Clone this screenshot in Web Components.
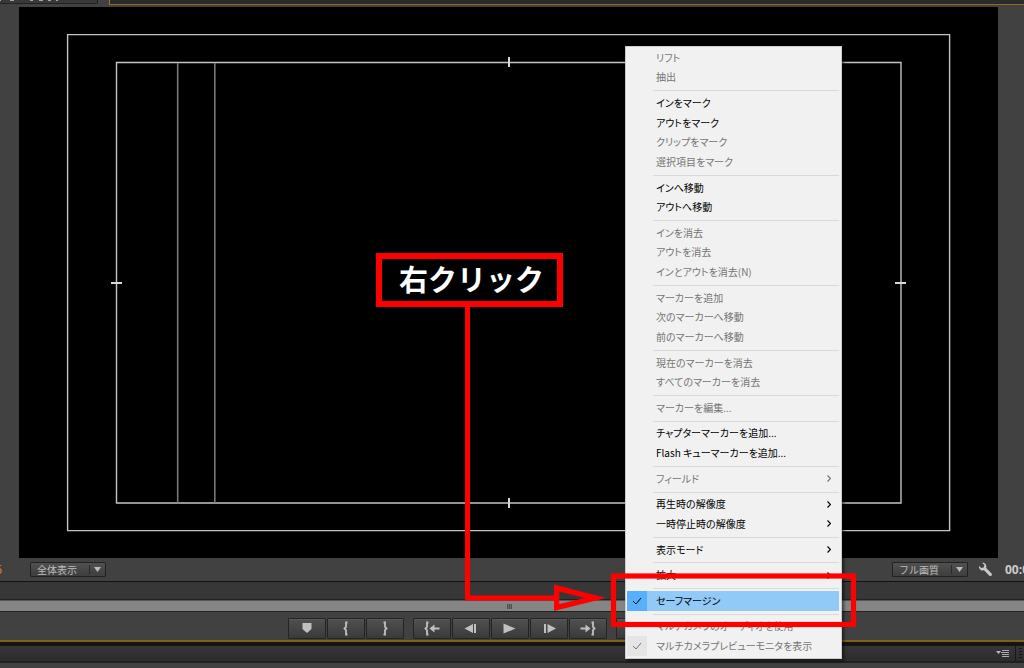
<!DOCTYPE html>
<html lang="ja"><head><meta charset="utf-8"><title>プログラムモニター</title>
<style>
html,body{margin:0;height:100%}
body{background:#414141;overflow:hidden;font-family:"Noto Sans CJK JP","Noto Sans",sans-serif}
</style></head><body>
<monitor-app></monitor-app>
<script>
const define=(name,html,init)=>customElements.define(name,class extends HTMLElement{
  connectedCallback(){
    if(this.shadowRoot)return;
    this.attachShadow({mode:'open'}).innerHTML=html;
    if(init)init.call(this,this.shadowRoot);
  }
});

define('panel-tabs',`<style>
:host{display:flex;gap:11px;height:7px;flex:none;align-items:flex-start}
.tab{width:98px;height:4px;box-sizing:border-box;background:#383838;border-bottom:1px solid #222;border-right:1px solid #222;border-radius:0 0 2px 0}
.tab svg{display:block}
.active{flex:1;height:5px;box-sizing:border-box;background:#2b2b2b;border-left:1px solid #a07a1c;border-bottom:1px solid #8f6c18}
</style><div class="tab"><svg width="97" height="1" aria-hidden="true"><path d="M0 .5h1M10 .5h4M30 .5h3M39 .5h4M48 .5h3M56 .5h2" stroke="#a8a8a0"/></svg></div><div class="active"></div>`);

define('safe-margins',`<style>
:host{display:block;flex:1;min-height:0;background:#000;margin:0 26px 0 19px}
svg{display:block;width:100%;height:100%}
path,rect{fill:none;stroke:#c4c4c4;stroke-width:1.400;vector-effect:non-scaling-stroke}
.guides{stroke:#777;stroke-width:1.600}.ticks{stroke:#d8d8d8;stroke-width:2}
</style><svg viewBox="0 0 979 551" preserveAspectRatio="none" aria-hidden="true">
<rect x="48.600" y="27.600" width="882" height="496"/>
<rect x="97.500" y="55.500" width="784.500" height="440.500"/>
<path class="guides" d="M158.700 56v440M195.800 56v440"/>
<path class="ticks" d="M490 50v10M490 491v10M92 276h11M876 276h11"/>
</svg>`);

define('drop-field',`<style>
:host{display:block;width:76px;flex:none}
label{display:grid;position:relative}
select{appearance:none;width:100%;height:15px;box-sizing:border-box;margin:0;padding:0 20px 0 6px;border:1px solid #222;border-radius:1px;background:linear-gradient(#505050,#3e3e3e);color:#bdbdbd;font:10px/13px "Noto Sans CJK JP","Noto Sans",sans-serif}
svg{position:absolute;right:4px;top:3px;pointer-events:none}
</style><label><select></select><svg width="13" height="9" aria-hidden="true"><path d="M.5 0v9" stroke="#2a2a2a"/><path d="M5 2h7l-3.500 5z" fill="#bbb"/></svg></label>`,function(r){
  const s=r.querySelector('select');s.setAttribute('aria-label',this.getAttribute('label'));s.add(new Option(this.getAttribute('value')));
});

define('status-row',`<style>
:host{display:flex;align-items:center;height:23px;flex:none;border-bottom:1px solid #111}
.frame{width:2px;margin-right:28px;overflow:hidden;display:flex;justify-content:flex-end;color:#e87e1c;font:12px/14px "Noto Sans",sans-serif}
.space{flex:1}
button{border:0;background:none;padding:0;margin:0 12px 0 10px;width:15px;height:15px}
svg{display:block}
.time{width:19px;overflow:hidden;white-space:nowrap;color:#ccc;font:bold 12px/14px "Open Sans","Noto Sans",sans-serif}
</style><span class="frame">5</span><drop-field label="ズームレベル" value="全体表示"></drop-field><span class="space"></span>
<drop-field label="再生解像度" value="フル画質"></drop-field>
<button aria-label="設定"><svg width="15" height="15" viewBox="0 0 15 15"><path d="M4.200.900 6.400 3.100 5.700 5.400 3.400 6 1.100 3.900C.6 6.800 3 9 6 8.300L11.300 13.700C12.700 15 14.900 13 13.600 11.500L8.200 6.100C9 3 7 .300 4.200.900Z" fill="#c8c8c8"/></svg></button><span class="time">00:0</span>`);

define('time-ruler',`<style>
:host{display:block;flex:none}
.ruler{height:17px;background:#373737;border-bottom:1px solid #222}
.bar{height:12px;background:#858585;border-bottom:1px solid #222;border-top:1px solid #555;box-sizing:border-box;display:flex;justify-content:center;align-items:center;padding-right:6px}
.grip{width:5px;height:5px;background:repeating-linear-gradient(90deg,#505050 0 1px,#6b6b6b 1px 2px)}
</style><div class="ruler"></div><div class="bar"><div class="grip"></div></div>`);

const icons={
 marker:'<path d="M14 5h9v6l-4.500 4L14 11z"/>',
 in:'<path d="M20 4.500h-1.500v4.500l-1.500 1.500 1.500 1.500v4.500H20" class="l"/>',
 out:'<path d="M17 4.500h1.500v4.500l1.500 1.500-1.500 1.500v4.500H17" class="l"/>',
 goin:'<path d="M15 4.500h-1.500v4.500L12 10.500l1.500 1.500v4.500H15" class="l"/><path d="M16 10.500l5-4v3h5v2h-5v3z"/>',
 back:'<path d="M12 10.500l8.500-4.500v9zM21.500 6h2v9h-2z"/>',
 play:'<path d="M12 5.500l12 5-12 5z"/>',
 step:'<path d="M13.500 6h2v9h-2zM17 6l8.500 4.500L17 15z"/>',
 goout:'<path d="M22 4.500h1.500v4.500l1.500 1.500-1.500 1.500v4.500H22" class="l"/><path d="M21 10.500l-5-4v3h-5v2h5v3z"/>'};
define('transport-button',`<style>
:host{display:block;width:38px;height:21px}
button{display:block;width:100%;height:100%;box-sizing:border-box;padding:0;border:1px solid #242424;border-radius:1px;background:linear-gradient(#505050,#3a3a3a);box-shadow:inset 0 1px #5a5a5a}
svg{display:block;margin:-1px;fill:#c0c0c0}.l{fill:none;stroke:#c0c0c0;stroke-width:1.800}
</style><button><svg width="38" height="21" viewBox="0 0 37 21" aria-hidden="true"></svg></button>`,function(r){
  r.querySelector('button').setAttribute('aria-label',this.getAttribute('label'));
  r.querySelector('svg').innerHTML=icons[this.getAttribute('icon')]||'';
});
define('transport-bar',`<style>
:host{display:flex;justify-content:center;align-items:flex-end;gap:9px;height:28px;flex:none;padding:0 5px 1px 0;box-sizing:border-box}
div{display:flex;gap:1px}
</style><div><transport-button icon="marker" label="マーカーを追加"></transport-button><transport-button icon="in" label="インをマーク"></transport-button><transport-button icon="out" label="アウトをマーク"></transport-button></div>
<div><transport-button icon="goin" label="インへ移動"></transport-button><transport-button icon="back" label="前のフレーム"></transport-button><transport-button icon="play" label="再生"></transport-button><transport-button icon="step" label="次のフレーム"></transport-button><transport-button icon="goout" label="アウトへ移動"></transport-button></div>
<div><transport-button label="リフト"></transport-button><transport-button label="抽出"></transport-button><transport-button label="フレームを書き出し"></transport-button></div>`);

define('panel-footer',`<style>
:host{display:block;flex:none;border-top:2px solid #806015}
.edge{height:4px;background:#151515}
.row{display:flex;height:15px;background:linear-gradient(#363636,#2c2c2c);border-bottom:2px solid #202020}
.main{flex:1;display:flex;justify-content:flex-end;align-items:center;padding-right:5px;border-right:1px solid #191919}
.next{width:8px;display:flex;align-items:center;justify-content:center}
.base{height:5px;background:#414141}svg{display:block}
</style><div class="edge"></div><div class="row"><div class="main"><svg width="14" height="9" aria-hidden="true"><path d="M0 2h5L2.500 5z" fill="#bbb"/><path d="M6 1.500h7M5 3.500h8M6 5.500h7M6 7.500h7" stroke="#aaa"/></svg></div><div class="next"><svg width="3" height="12" aria-hidden="true"><path d="M1.500 0v12" stroke="#151515" stroke-width="3" stroke-dasharray="1 2"/></svg></div></div><div class="base"></div>`);

define('menu-item',`<style>
:host{display:flex;flex:1 1 0;min-height:0}
button{flex:1;display:flex;align-items:center;min-width:0;padding:0 8px 0 0;border:0;background:none;text-align:left;color:#000;font:10px/16px "Noto Sans CJK JP","Noto Sans",sans-serif;font-feature-settings:"palt";white-space:nowrap}
:host([disabled]) button{color:#757575}
:host([current]) button{background:#91c9f7}
.check{width:20px;align-self:stretch;margin-right:9px;display:flex;align-items:center;justify-content:center;flex:none}
:host([checked]) .check{background:#e5e5e5}
:host([current]) .check{background:#58b0fb}
.text{flex:1}svg{display:none;fill:none;stroke:currentColor;flex:none}
:host([checked]) .tick,:host([submenu]) .arrow{display:block}
</style><button role="menuitem"><span class="check"><svg class="tick" width="10" height="8"><path d="M1 4l3 3 5-6"/></svg></span><span class="text"><slot></slot></span><svg class="arrow" width="4" height="7"><path d="M.5.500l3 3-3 3" stroke-width="1.200"/></svg></button>`,function(r){
  r.querySelector('button').disabled=this.hasAttribute('disabled');
});
define('menu-separator',`<style>:host{display:block;height:1px;margin:3px 0 2px 26px;background:#d9d9d9;flex:none}</style>`);

const groups=[
 ['-リフト','-抽出'],
 ['インをマーク','アウトをマーク','-クリップをマーク','-選択項目をマーク'],
 ['インへ移動','アウトへ移動'],
 ['-インを消去','-アウトを消去','-インとアウトを消去(N)'],
 ['-マーカーを追加','-次のマーカーへ移動','-前のマーカーへ移動'],
 ['-現在のマーカーを消去','-すべてのマーカーを消去'],
 ['-マーカーを編集...'],
 ['チャプターマーカーを追加...','Flash キューマーカーを追加...'],
 ['->フィールド'],
 ['>再生時の解像度','>一時停止時の解像度'],
 ['>表示モード'],['>拡大'],['+*セーフマージン'],
 ['-マルチカメラのオーディオを使用','-+マルチカメラプレビューモニタを表示']];
define('context-menu',`<style>
:host{position:absolute;left:625px;top:46px;width:217px;height:613px;box-sizing:border-box;display:flex;flex-direction:column;padding:1px 2px 2px 1px;border:1px solid #ccc;background:#f1f1f1;box-shadow:2px 2px 3px #0008}
</style>`,function(r){
  const flags={'-':'disabled','>':'submenu','+':'checked','*':'current'};
  groups.forEach((g,i)=>{
    if(i)r.append(document.createElement('menu-separator'));
    g.forEach(t=>{
      const el=document.createElement('menu-item');
      while(flags[t[0]]){el.setAttribute(flags[t[0]],'');t=t.slice(1)}
      el.textContent=t;r.append(el);
    });
  });
});

define('callout-guide',`<style>
:host{position:absolute;left:0;top:0;pointer-events:none}
svg{display:block;overflow:visible}
.label{position:absolute;left:376px;top:253px;width:187px;height:54px;box-sizing:border-box;padding:0 0 4px 4px;border:6px solid #f00;background:#000;color:#fff;display:flex;align-items:center;justify-content:center;font:bold 29px/38px "Noto Sans CJK JP",sans-serif;white-space:nowrap}
</style><svg width="860" height="630" fill="none" stroke="#f00" aria-hidden="true"><path d="M467.500 300v298H556" stroke-width="5"/><path d="M554 584.500 606 598 554 611zM559.300 591.500V604L585 598z" stroke="none" fill="#f00" fill-rule="evenodd"/><rect x="613.500" y="576" width="240" height="48.500" stroke-width="5.200"/></svg><div class="label">右クリック</div>`);

define('monitor-app',`<style>
:host{display:flex;flex-direction:column;position:relative;height:100vh;overflow:hidden;background:#414141}
</style><panel-tabs></panel-tabs><safe-margins></safe-margins><status-row></status-row><time-ruler></time-ruler><transport-bar></transport-bar><panel-footer></panel-footer><context-menu></context-menu><callout-guide></callout-guide>`);
</script></body></html>
